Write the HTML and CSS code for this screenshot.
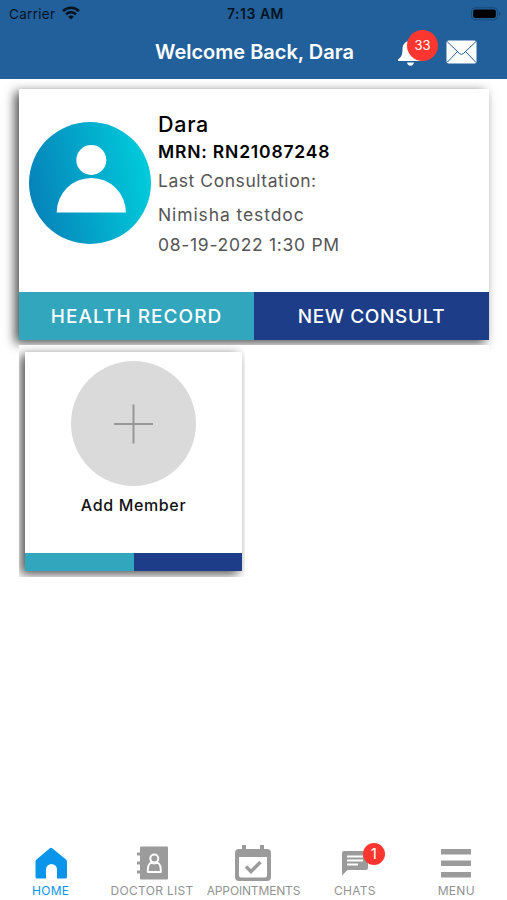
FILE: index.html
```html
<!DOCTYPE html>
<html lang="en">
<head>
  <meta charset="UTF-8" />
  <meta name="viewport" content="width=device-width, initial-scale=1.0" />
  <title>Home</title>
  <link rel="stylesheet" href="styles.css">
</head>
<body>
  <header class="header">
    <div class="status-bar">
      <div class="carrier">
        <span>Carrier</span>
        <svg class="wifi" width="18" height="14" viewBox="0 0 18 14" fill="none" stroke="#07131f" stroke-width="2.5">
          <path d="M1 5.1a11.4 11.4 0 0 1 16 0" />
          <path d="M4 8.3a7.1 7.1 0 0 1 10 0" />
          <path d="M9 13.6L6.2 10.8a4 4 0 0 1 5.6 0z" fill="#07131f" stroke="none" />
        </svg>
      </div>
      <div class="time">7:13 AM</div>
      <svg class="battery" width="31" height="14" viewBox="0 0 31 14">
        <rect x="0.5" y="0.8" width="26" height="12" rx="3.5" fill="none" stroke="#174977" />
        <rect x="2.2" y="2.6" width="22.6" height="8.4" rx="2" fill="#000" />
        <path d="M28 4.8c2 .8 2 3.2 0 4z" fill="#174977" />
      </svg>
    </div>
    <div class="title-bar">
      <h1>Welcome Back, Dara</h1>
      <div class="bell">
        <svg width="26" height="27" viewBox="0 0 26 27" fill="#fff">
          <path d="M12.5 0c1.4 0 2 .8 2 2 4 1 6 4 6 8 0 6 1 7.5 4 10.5v1.5H0v-1.5C3.5 17.5 4.5 16 4.5 10c0-4 2-7 6-8 0-1.2.6-2 2-2z" />
          <path d="M9 23.5h7c-.3 2-1.6 3.2-3.5 3.2s-3.2-1.2-3.5-3.2z" />
        </svg>
        <span class="badge badge-bell">33</span>
      </div>
      <svg class="mail" width="31" height="24" viewBox="0 0 31 24">
        <rect x="0.5" y="0.5" width="30" height="23" rx="2" fill="#fff" />
        <path d="M1 1.5l12.5 12q2 1.8 4 0L30 1.5M1 22.5l10.5-11M30 22.5l-10.5-11" fill="none" stroke="#22609c" />
      </svg>
    </div>
  </header>

  <main class="content">
    <section class="card patient-card">
      <div class="patient">
        <svg class="avatar" width="122" height="122" viewBox="0 0 122 122">
          <defs>
            <linearGradient id="avatarFill" x1="0" y1="0.6" x2="1" y2="0.4">
              <stop offset="0" stop-color="#0682b9" />
              <stop offset="1" stop-color="#00ccdb" />
            </linearGradient>
          </defs>
          <circle cx="61" cy="61" r="61" fill="url(#avatarFill)" />
          <circle cx="62.3" cy="38" r="15" fill="#fff" />
          <path d="M27.7 90.5a34.6 34.6 0 0 1 69.2 0z" fill="#fff" />
        </svg>
        <div class="details">
          <h2>Dara</h2>
          <p class="mrn">MRN: RN21087248</p>
          <p class="label">Last Consultation:</p>
          <p class="doctor">Nimisha testdoc</p>
          <p class="date">08-19-2022 1:30 PM</p>
        </div>
      </div>
      <div class="actions">
        <button class="teal record">HEALTH RECORD</button>
        <button class="navy consult">NEW CONSULT</button>
      </div>
    </section>

    <section class="members">
      <div class="member-slot">
        <div class="card member-card">
          <div class="member-body">
            <div class="add-circle">
              <svg width="40" height="40" viewBox="0 0 40 40" stroke="#979797" stroke-width="2">
                <path d="M19.5 0.5v39M0 20h39" />
              </svg>
            </div>
            <p class="add-label">Add Member</p>
          </div>
          <div class="strip">
            <div class="teal"></div>
            <div class="navy"></div>
          </div>
        </div>
      </div>
    </section>
  </main>

  <nav class="tabs">
    <a class="tab active">
      <svg width="34" height="34" viewBox="0 0 34 34" fill="#0a95ea">
        <path d="M15.8 2.2q1.2-1 2.4 0L32 13.6q1 .9 1 2.2V31q0 1.5-1.5 1.5h-8.500v-9a5.5 5.5 0 0 0-11 0v9h-9Q1.500 32.500 1.500 31V15.800Q1.500 14.500 2.500 13.600z" />
      </svg>
      <span class="home">HOME</span>
    </a>
    <a class="tab doctor-tab">
      <svg width="34" height="34" viewBox="0 0 34 34">
        <path d="M5 .5h26q1 0 1 1v31q0 1-1 1H5q-1 0-1-1v-31q0-1 1-1z" fill="#9b9b9b" />
        <path d="M1 8h4M1 17h4M1 26h4" stroke="#9b9b9b" stroke-width="3" />
        <circle cx="18.3" cy="12.5" r="4" fill="none" stroke="#fff" stroke-width="2" />
        <path d="M15 16.5q-3.5 2-3.2 9.500h13q.3-7.500-3.200-9.500q-3.300 2-6.600 0z" fill="none" stroke="#fff" stroke-width="2" stroke-linejoin="round" />
      </svg>
      <span class="doctors">DOCTOR LIST</span>
    </a>
    <a class="tab">
      <svg width="36" height="36" viewBox="0 0 36 36">
        <path d="M9 0v6M27 0v6" stroke="#9b9b9b" stroke-width="4" />
        <path fill-rule="evenodd" d="M4 4h28q4 0 4 4v24q0 4-4 4H4q-4 0-4-4V8q0-4 4-4zM4 12v18.500q0 2 2 2h24q2 0 2-2V12z" fill="#9b9b9b" />
        <path d="M11 21.500l5 5 9.500-9.500" fill="none" stroke="#9b9b9b" stroke-width="3.500" />
      </svg>
      <span class="appointments">APPOINTMENTS</span>
    </a>
    <a class="tab">
      <div class="chat-icon">
        <svg width="26" height="26" viewBox="0 0 26 26">
          <path d="M2 1h22q2 0 2 2v15q0 2-2 2H5.500L0 25.500V3q0-2 2-2z" fill="#9b9b9b" />
          <path d="M5 6.500h16M5 10.500h16M5 14.500h11" stroke="#fff" stroke-width="2" />
        </svg>
        <span class="badge badge-chat">1</span>
      </div>
      <span class="chats">CHATS</span>
    </a>
    <a class="tab">
      <svg width="30" height="30" viewBox="0 0 30 30" fill="#9b9b9b">
        <path d="M0 1h30v5.500H0zM0 12.500h30V18H0zM0 24h30v5.500H0z" />
      </svg>
      <span class="menu">MENU</span>
    </a>
  </nav>
</body>
</html>
```

FILE: styles.css
```css
* {
  margin: 0;
  padding: 0;
  box-sizing: border-box;
}

body {
  font-family: 'Inter', sans-serif;
  background-color: #ffffff;
  height: 900px;
  display: flex;
  flex-direction: column;
  overflow: hidden;
}

.header {
  background-color: #22609c;
  height: 79px;
}

.status-bar {
  height: 27px;
  display: grid;
  grid-template-columns: 1fr 1fr 1fr;
  align-items: center;
  padding: 0 5px 0 9px;
  color: #07131f;
  font-size: 13.5px;
}

.carrier {
  display: flex;
  align-items: center;
  gap: 7px;
  letter-spacing: 0.3px;
}

.wifi {
  margin-bottom: 2px;
}

.time {
  text-align: center;
  font-size: 14px;
  font-weight: 600;
  letter-spacing: 0.5px;
}

.battery {
  justify-self: end;
}

.title-bar {
  height: 50px;
  display: flex;
  align-items: center;
  padding: 0 30px 0 155px;
}

h1 {
  width: 243px;
  font-size: 20px;
  font-weight: 600;
  color: #ffffff;
  white-space: nowrap;
}

.bell {
  position: relative;
  width: 26px;
  height: 27px;
}

.badge {
  position: absolute;
  display: flex;
  justify-content: center;
  align-items: center;
  background-color: #fd3730;
  color: #ffffff;
  border-radius: 50%;
}

.badge-bell {
  left: 9px;
  top: -9px;
  width: 31px;
  height: 31px;
  font-size: 13px;
}

.mail {
  margin-left: auto;
}

.content {
  flex: 1;
  padding: 10px 18px 0 19px;
}

.card {
  background-color: #ffffff;
  box-shadow: -4px 3px 10px rgba(0, 0, 0, 0.7);
}

.patient-card {
  height: 251px;
}

.patient {
  height: 203px;
  display: flex;
  gap: 7px;
  padding: 22px 0 0 10px;
}

.avatar {
  margin-top: 11px;
}

.details {
  color: #555555;
  font-size: 17.5px;
  white-space: nowrap;
}

h2 {
  height: 27px;
  line-height: 27px;
  color: #000000;
  font-size: 21.5px;
  font-weight: 500;
  letter-spacing: 0.7px;
}

.mrn {
  line-height: 28px;
  color: #000000;
  font-size: 17.5px;
  font-weight: 600;
  letter-spacing: 0.8px;
}

.label {
  line-height: 29px;
  letter-spacing: 0.55px;
}

.doctor {
  margin-top: 5px;
  line-height: 30px;
  letter-spacing: 0.9px;
}

.date {
  line-height: 30px;
  letter-spacing: 0.7px;
}

.actions {
  display: flex;
  height: 48px;
}

.teal {
  background-color: #32a6bd;
}

.navy {
  background-color: #1d3d88;
}

button {
  flex: 1;
  border: none;
  color: #ffffff;
  font-family: inherit;
  font-size: 19px;
  font-weight: 500;
}

.record {
  letter-spacing: 1.05px;
}

.consult {
  letter-spacing: 0.65px;
}

/* covers the lower edge of the patient card shadow */
.members {
  position: relative;
  margin-top: 5px;
  background-color: #ffffff;
}

.member-slot {
  width: 226px;
  height: 232px;
  padding: 7px 3px 6px 6px;
  overflow: hidden;
}

.member-card {
  height: 219px;
}

.member-body {
  height: 201px;
  padding-top: 9px;
  text-align: center;
}

.add-circle {
  width: 125px;
  height: 125px;
  margin: 0 auto;
  display: flex;
  justify-content: center;
  align-items: center;
  border-radius: 50%;
  background-color: #dadada;
}

.add-label {
  line-height: 39px;
  color: #111111;
  font-size: 16px;
  font-weight: 500;
  letter-spacing: 0.65px;
}

.strip {
  display: flex;
  height: 18px;
}

.strip div {
  flex: 1;
}

.tabs {
  display: grid;
  grid-template-columns: repeat(5, 1fr);
  height: 58px;
}

.tab {
  display: grid;
  grid-template-rows: 42px 14px;
  justify-items: center;
  align-items: center;
  color: #929292;
  font-size: 12px;
  line-height: 14px;
  white-space: nowrap;
}

.active {
  color: #0a95ea;
}

.doctor-tab svg {
  margin-left: 2px;
}

.home,
.doctors,
.chats,
.menu {
  letter-spacing: 0.3px;
}

.appointments {
  letter-spacing: -0.15px;
}

.chat-icon {
  position: relative;
  width: 26px;
  height: 26px;
}

.badge-chat {
  left: 21px;
  top: -7px;
  width: 22px;
  height: 22px;
  font-size: 15px;
}
```
